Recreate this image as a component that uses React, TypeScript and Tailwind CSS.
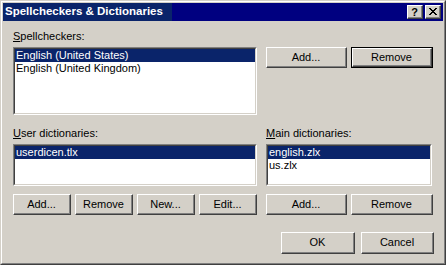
import type { ReactNode } from 'react';

const font = "font-['Liberation_Sans',Arial,sans-serif]";

function Button({ children, w, h = 'h-[21px]', isDefault = false }: { children: ReactNode; w: string; h?: string; isDefault?: boolean }) {
  const face = (
    <div className="flex-1 flex border-t border-l border-white border-r border-b border-r-[#404040] border-b-[#404040]">
      <div className="flex-1 flex items-center justify-center border-r border-b border-[#808080] text-[11px] text-black leading-none">
        {children}
      </div>
    </div>
  );
  if (isDefault) {
    return <div className={`${w} ${h} flex border border-black`}>{face}</div>;
  }
  return <div className={`${w} ${h} flex`}>{face}</div>;
}

function ListBox({ items, w, h }: { items: string[]; w: string; h: string }) {
  return (
    <div className={`${w} ${h} flex border-t border-l border-[#808080] border-r border-b border-r-white border-b-white`}>
      <div className="flex-1 bg-white border-t border-l border-[#404040] border-r border-b border-r-[#d4d0c8] border-b-[#d4d0c8]">
        {items.map((item, i) => (
          <div
            key={item}
            className={`h-[13px] leading-[13px] pl-[1px] text-[11px] whitespace-nowrap ${i === 0 ? 'bg-[#0a246a] text-white' : 'text-black'}`}
          >
            {item}
          </div>
        ))}
      </div>
    </div>
  );
}

function Label({ first, rest }: { first: string; rest: string }) {
  return (
    <div className="h-[13px] leading-[13px] text-[11px] text-black">
      <span className="underline underline-offset-[1px]">{first}</span>
      {rest}
    </div>
  );
}

export default function App() {
  return (
    <div className={`${font} w-[446px] h-[265px] flex bg-[#d4d0c8] border-t border-l border-[#d4d0c8] border-r border-b border-r-[#404040] border-b-[#404040]`}>
      <div className="flex-1 flex flex-col p-[1px] border-t border-l border-white border-r border-b border-r-[#808080] border-b-[#808080]">
        {/* Title bar */}
        <div className="h-[18px] flex items-center pl-[2px] pr-[2px] bg-[linear-gradient(to_right,#0a246a_169px,#000080_169px)]">
          <span className="flex-1 text-white font-bold text-[11.5px] leading-none">Spellcheckers &amp; Dictionaries</span>
          <div className="flex gap-[2px]">
            <div className="w-[16px] h-[14px] flex bg-[#d4d0c8] border-t border-l border-white border-r border-b border-r-[#404040] border-b-[#404040]">
              <div className="flex-1 flex items-center justify-center border-r border-b border-[#808080] text-[11px] font-bold text-black leading-none pt-[1px]">?</div>
            </div>
            <div className="w-[16px] h-[14px] flex bg-[#d4d0c8] border-t border-l border-white border-r border-b border-r-[#404040] border-b-[#404040]">
              <div className="flex-1 flex items-center justify-center border-r border-b border-[#808080]">
                <svg width="8" height="7" viewBox="0 0 8 7" shapeRendering="crispEdges">
                  <path d="M0 0h2v1H0zM6 0h2v1H6zM1 1h2v1H1zM5 1h2v1H5zM2 2h4v1H2zM3 3h2v1H3zM2 4h4v1H2zM1 5h2v1H1zM5 5h2v1H5zM0 6h2v1H0zM6 6h2v1H6z" fill="#000" />
                </svg>
              </div>
            </div>
          </div>
        </div>

        {/* Body */}
        <div className="flex-1 flex flex-col pl-[10px] pr-[8px] pt-[9px]">
          <Label first="S" rest="pellcheckers:" />
          <div className="flex mt-[4px]">
            <ListBox items={['English (United States)', 'English (United Kingdom)']} w="w-[244px]" h="h-[68px]" />
            <div className="flex gap-[4px] ml-[9px]">
              <Button w="w-[81px]">Add...</Button>
              <Button w="w-[82px]" isDefault>Remove</Button>
            </div>
          </div>

          <div className="flex mt-[12px] gap-[9px]">
            <div className="flex flex-col w-[244px]">
              <Label first="U" rest="ser dictionaries:" />
              <div className="mt-[4px]">
                <ListBox items={['userdicen.tlx']} w="w-[244px]" h="h-[42px]" />
              </div>
              <div className="flex gap-[4px] mt-[8px]">
                <Button w="w-[58px]">Add...</Button>
                <Button w="w-[58px]">Remove</Button>
                <Button w="w-[58px]">New...</Button>
                <Button w="w-[58px]">Edit...</Button>
              </div>
            </div>
            <div className="flex flex-col w-[167px]">
              <Label first="M" rest="ain dictionaries:" />
              <div className="mt-[4px]">
                <ListBox items={['english.zlx', 'us.zlx']} w="w-[166px]" h="h-[42px]" />
              </div>
              <div className="flex gap-[4px] mt-[8px]">
                <Button w="w-[81px]">Add...</Button>
                <Button w="w-[82px]">Remove</Button>
              </div>
            </div>
          </div>

          <div className="flex justify-end gap-[6px] mt-[17px] pr-[1px]">
            <Button w="w-[74px]" h="h-[22px]">OK</Button>
            <Button w="w-[73px]" h="h-[22px]">Cancel</Button>
          </div>
        </div>
      </div>
    </div>
  );
}
